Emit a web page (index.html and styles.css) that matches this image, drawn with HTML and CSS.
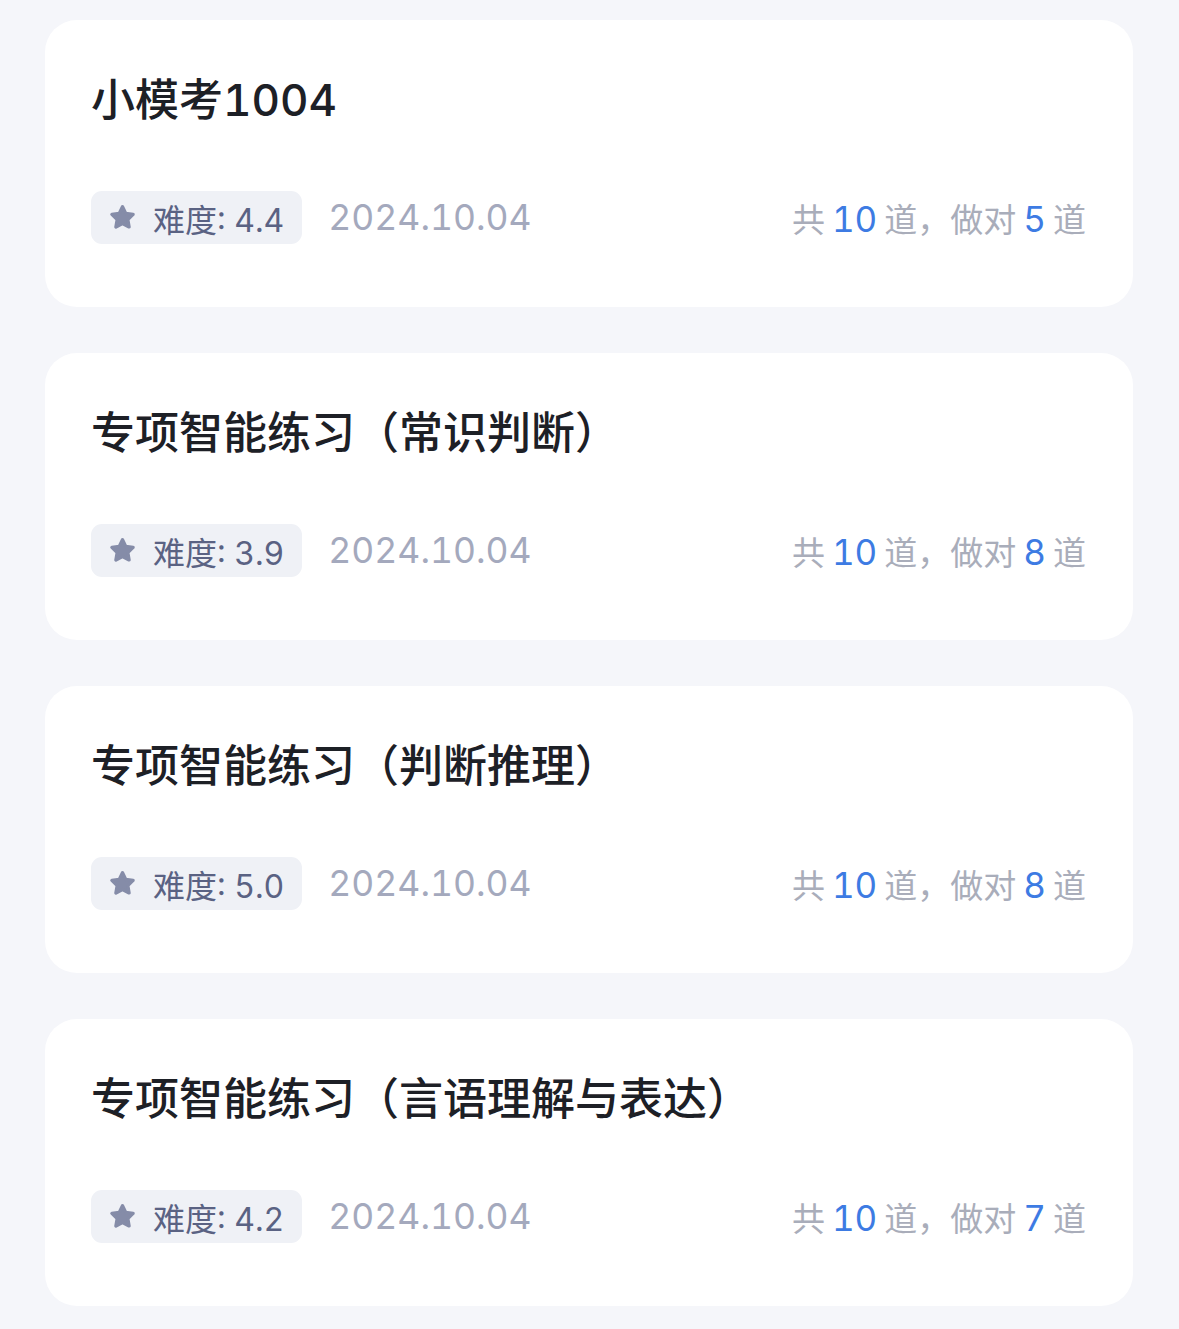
FILE: index.html
```html
<!DOCTYPE html>
<html lang="zh-CN">
<head>
<meta charset="utf-8">
<title>练习记录</title>
<link rel="stylesheet" href="styles.css">
</head>
<body>
<div class="list">
  <div class="card">
    <div class="title">小模考1004</div>
    <div class="meta">
      <div class="badge"><svg class="star" viewBox="0 0 24 24"><path d="M12 3.6l2.5 5.2 5.7.8-4.1 4 1 5.7-5.1-2.7-5.1 2.7 1-5.7-4.1-4 5.7-.8z"/></svg><span>难度: 4.4</span></div>
      <div class="date">2024.10.04</div>
      <div class="count">共<span class="num">10</span>道，做对<span class="num">5</span>道</div>
    </div>
  </div>
  <div class="card">
    <div class="title">专项智能练习（常识判断）</div>
    <div class="meta">
      <div class="badge"><svg class="star" viewBox="0 0 24 24"><path d="M12 3.6l2.5 5.2 5.7.8-4.1 4 1 5.7-5.1-2.7-5.1 2.7 1-5.7-4.1-4 5.7-.8z"/></svg><span>难度: 3.9</span></div>
      <div class="date">2024.10.04</div>
      <div class="count">共<span class="num">10</span>道，做对<span class="num">8</span>道</div>
    </div>
  </div>
  <div class="card">
    <div class="title">专项智能练习（判断推理）</div>
    <div class="meta">
      <div class="badge"><svg class="star" viewBox="0 0 24 24"><path d="M12 3.6l2.5 5.2 5.7.8-4.1 4 1 5.7-5.1-2.7-5.1 2.7 1-5.7-4.1-4 5.7-.8z"/></svg><span>难度: 5.0</span></div>
      <div class="date">2024.10.04</div>
      <div class="count">共<span class="num">10</span>道，做对<span class="num">8</span>道</div>
    </div>
  </div>
  <div class="card">
    <div class="title">专项智能练习（言语理解与表达）</div>
    <div class="meta">
      <div class="badge"><svg class="star" viewBox="0 0 24 24"><path d="M12 3.6l2.5 5.2 5.7.8-4.1 4 1 5.7-5.1-2.7-5.1 2.7 1-5.7-4.1-4 5.7-.8z"/></svg><span>难度: 4.2</span></div>
      <div class="date">2024.10.04</div>
      <div class="count">共<span class="num">10</span>道，做对<span class="num">7</span>道</div>
    </div>
  </div>
</div>
</body>
</html>
```
FILE: styles.css
```css
html, body {
  margin: 0;
  padding: 0;
  background: #f5f6fa;
}
body {
  font-family: "Inter", "Noto Sans CJK SC", sans-serif;
  font-variant-numeric: tabular-nums;
}
.list {
  display: flex;
  flex-direction: column;
  gap: 46px;
  padding: 20px 46px 23px 45px;
}
.card {
  background: #ffffff;
  border-radius: 32px;
  padding: 52px 47px 63px 46px;
}
.title {
  font-size: 44px;
  line-height: 56px;
  font-weight: 500;
  color: #1d2026;
  margin-bottom: 63px;
  white-space: nowrap;
}
.meta {
  display: flex;
  align-items: center;
  height: 53px;
}
.badge {
  display: flex;
  align-items: center;
  height: 53px;
  padding: 0 18px 0 16px;
  background: #eff1f6;
  border-radius: 11px;
  box-sizing: border-box;
  font-size: 32px;
  color: #5a6283;
}
.star {
  width: 31px;
  height: 31px;
  margin-right: 15px;
  fill: #858ca8;
  stroke: #858ca8;
  stroke-width: 2.6;
  stroke-linejoin: round;
}
.date {
  margin-left: 26px;
  font-size: 35.5px;
  color: #a4a9bd;
}
.count {
  margin-left: auto;
  font-size: 33px;
  color: #a9adba;
  white-space: nowrap;
}
.num {
  color: #3d7be3;
  margin: 0 7px;
  font-size: 35px;
}
```
